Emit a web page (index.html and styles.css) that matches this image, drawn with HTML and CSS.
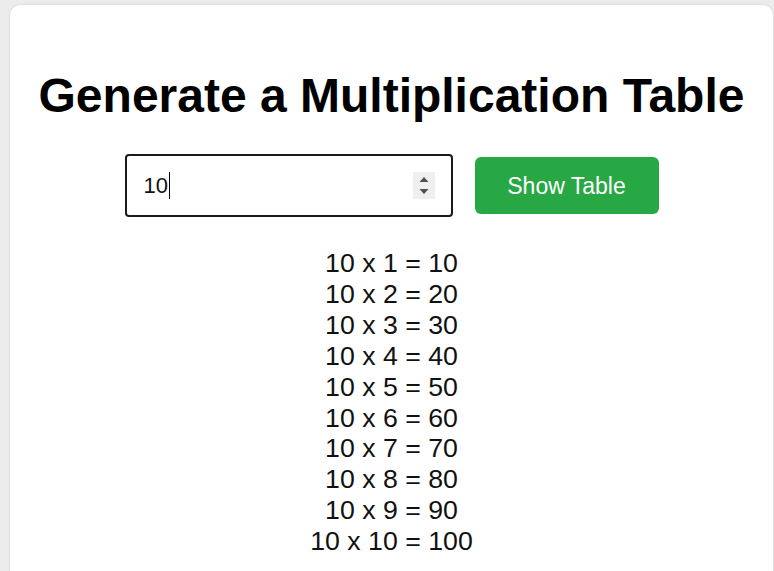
FILE: index.html
```html
<!DOCTYPE html>
<html lang="en">
<head>
<meta charset="utf-8">
<title>Multiplication Table</title>
<link rel="stylesheet" href="styles.css">
</head>
<body>
<main class="card">
  <h1 class="title">Generate a Multiplication Table</h1>
  <div class="controls">
    <div class="field">
      <span class="value">10</span><span class="caret"></span>
      <span class="spacer"></span>
      <svg class="spinner" width="22" height="27" viewBox="0 0 22 27" aria-hidden="true">
        <rect x="0" y="0" width="22" height="27" fill="#efefef"/>
        <polygon points="6.5,10 15.5,10 11,5" fill="#505050"/>
        <polygon points="6.5,17 15.5,17 11,22" fill="#505050"/>
      </svg>
    </div>
    <button class="btn" type="button">Show Table</button>
  </div>
  <div class="results">
    <div>10 x 1 = 10</div>
    <div>10 x 2 = 20</div>
    <div>10 x 3 = 30</div>
    <div>10 x 4 = 40</div>
    <div>10 x 5 = 50</div>
    <div>10 x 6 = 60</div>
    <div>10 x 7 = 70</div>
    <div>10 x 8 = 80</div>
    <div>10 x 9 = 90</div>
    <div>10 x 10 = 100</div>
  </div>
</main>
</body>
</html>
```
FILE: styles.css
```css
html, body {
  margin: 0;
  height: 100%;
}
body {
  background: #ececec;
  font-family: "Liberation Sans", Arial, sans-serif;
  padding: 5px 1px 0 10px;
  box-sizing: border-box;
  overflow: hidden;
}
.card {
  background: #ffffff;
  border-radius: 10px;
  box-shadow: 0 0 3px rgba(0, 0, 0, 0.12);
  padding: 31px 20px 40px;
  min-height: 600px;
  box-sizing: border-box;
}
.title {
  font-size: 48px;
  font-weight: bold;
  color: #000;
  text-align: center;
  margin: 32px 0 31px;
  line-height: 55px;
}
.controls {
  display: flex;
  justify-content: center;
  align-items: center;
  gap: 22px;
}
.field {
  box-sizing: border-box;
  width: 328px;
  height: 63px;
  border: 2px solid #1a1a1a;
  border-radius: 4px;
  display: flex;
  align-items: center;
  padding: 0 16px 0 17px;
  font-size: 22px;
  color: #111;
}
.value {
  line-height: 1;
}
.caret {
  display: inline-block;
  width: 1px;
  height: 27px;
  background: #000;
  margin-left: 1px;
}
.spacer {
  flex: 1;
}
.spinner {
  display: block;
}
.btn {
  width: 184px;
  height: 57px;
  background: #28a745;
  color: #fff;
  border: none;
  border-radius: 6px;
  font-family: "Liberation Sans", Arial, sans-serif;
  font-size: 23px;
  padding: 2px 0 0;
}
.results {
  margin-top: 31px;
  text-align: center;
  font-size: 26.7px;
  color: #111;
  line-height: 30.9px;
}
```
